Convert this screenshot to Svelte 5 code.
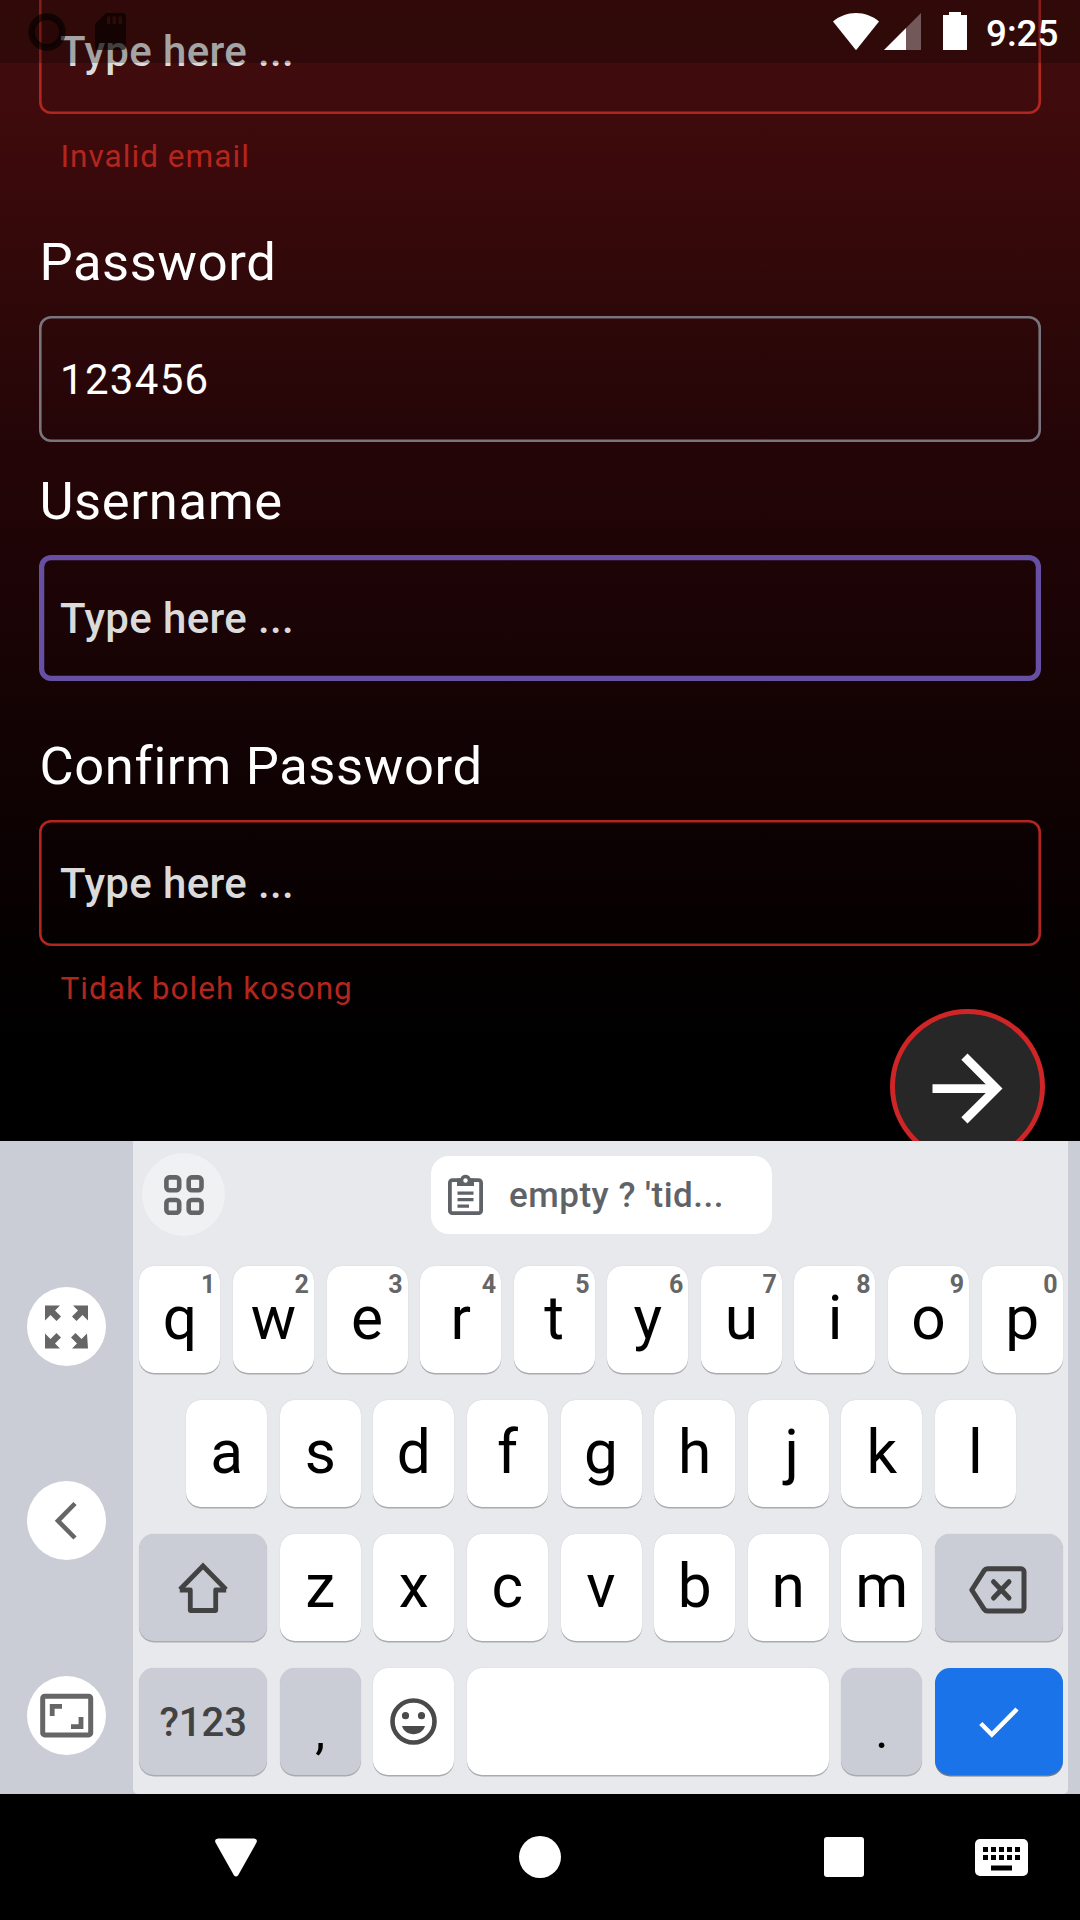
<script>
  const fields = [
    { label: 'Email', value: '', state: 'error', message: 'Invalid email', first: true },
    { label: 'Password', value: '123456', state: 'idle', message: null },
    { label: 'Username', value: '', state: 'focus', message: '' },
    { label: 'Confirm Password', value: '', state: 'error', message: 'Tidak boleh kosong' }
  ];
  const topRow = [...'qwertyuiop'].map((c, i) => ({ c, hint: (i + 1) % 10 }));
  const homeRow = [...'asdfghjkl'];
  const bottomRow = [...'zxcvbnm'];
</script>

<div class="screen">
  <main class="app">
    <form class="form">
      {#each fields as f}
        <section class="group">
          {#if !f.first}<div class="label">{f.label}</div>{/if}
          <div class="field {f.state}">
            <span class={f.value ? 'value' : 'hint'}>{f.value || 'Type here ...'}</span>
          </div>
          {#if f.message !== null}<div class="message" class:blank={!f.message}>{f.message}</div>{/if}
        </section>
      {/each}
      <div class="submit">
        <svg width="105" height="105" viewBox="0 0 24 24"><path fill="#fff" d="M12 4l-1.41 1.41L16.17 11H4v2h12.17l-5.58 5.59L12 20l8-8z" /></svg>
      </div>
    </form>

    <header class="status">
      <svg class="rec" width="38" height="38" viewBox="0 0 38 38"><circle cx="19" cy="19" r="15.4" fill="#000" fill-opacity=".12" stroke="#000" stroke-opacity=".58" stroke-width="6.6" /></svg>
      <svg class="sd" width="31" height="38" viewBox="0 0 31 38"><path fill="#000" fill-opacity=".6" fill-rule="evenodd" d="M11 0h16.500a3.500 3.500 0 0 1 3.500 3.500v30a3.500 3.500 0 0 1-3.500 3.500h-24a3.500 3.500 0 0 1-3.500-3.500v-22.500zM12 3.500v7.500h3.300v-7.500zM17.500 3.500v7.500h3.500v-7.500zM23.500 3.500v7.500h3.500v-7.500z" /></svg>
      <svg class="wifi" width="46" height="38" viewBox="0 0 46 38"><path fill="#fff" d="M0 8.500C6.500 3 14.500 0 23 0s16.500 3 23 8.500L23 37.300z" /></svg>
      <svg class="signal" width="37" height="37" viewBox="0 0 37 37"><path fill="#fff" fill-opacity=".32" d="M22 15L37 0v37H22z" /><path fill="#fff" d="M0 37L22 15v22z" /></svg>
      <svg class="battery" width="24" height="38" viewBox="0 0 24 38"><path fill="#fff" d="M6 0h12v3h6v35H0V3h6z" /></svg>
      <span class="clock">9:25</span>
    </header>
  </main>

  <section class="keyboard">
    <aside class="side">
      <div class="round">
        <svg width="79" height="79" viewBox="0 0 79 79" fill="#666"><path d="M18 18.500h15l-5 5 6 6-4.500 4.500-6-6-5.500 5.500zM61 18.500v15l-5.500-5.500-6 6-4.500-4.500 6-6-5-5zM18 61.500v-15l5.500 5.500 6-6 4.500 4.500-6 6 5 5zM61 61.500h-16l5-5-6-6 4.500-4.500 6 6 5.500-5.500z" /></svg>
      </div>
      <div class="round">
        <svg width="79" height="79" viewBox="0 0 79 79" fill="none" stroke="#666" stroke-width="4.600"><path d="M48 22.500L31 39.800L48 57" /></svg>
      </div>
      <div class="round">
        <svg width="79" height="79" viewBox="0 0 79 79" fill="none" stroke="#666"><rect x="15.700" y="20.300" width="48" height="38.600" rx="2" stroke-width="5" /><path stroke-width="4.800" d="M25.200 40V30.400H35M54 41v9.600H44" /></svg>
      </div>
    </aside>

    <div class="board">
      <div class="tools">
        <div class="apps">
          <svg width="40" height="40" viewBox="0 0 40 40" fill="none" stroke="#626565" stroke-width="4.600"><rect x="2.400" y="2.400" width="12.800" height="12.800" rx="3" /><rect x="24.700" y="2.400" width="12.800" height="12.800" rx="3" /><rect x="2.400" y="25" width="12.800" height="12.800" rx="3" /><rect x="24.700" y="25" width="12.800" height="12.800" rx="3" /></svg>
        </div>
        <div class="chip">
          <svg width="35" height="42" viewBox="0 0 35 42"><rect x="1.900" y="6.200" width="31.200" height="33" rx="2.500" fill="none" stroke="#5f6368" stroke-width="3.800" /><path fill="#5f6368" d="M9 4.500h3.500a5.200 5.200 0 0 1 10 0H26v7.500H9zM9.500 17.500h16v3.300h-16zM9.500 24h16v3.300h-16zM9.500 30.500h11.500v3.300h-11.500z" /><circle cx="17.500" cy="6.500" r="2.200" fill="#fff" /></svg>
          <span>empty ? 'tid...</span>
        </div>
      </div>

      <div class="row">
        {#each topRow as k}
          <div class="key">{k.c}<span class="digit">{k.hint}</span></div>
        {/each}
      </div>
      <div class="row">
        {#each homeRow as c}<div class="key" class:hooked={c === 'j'}>{c}</div>{/each}
      </div>
      <div class="row">
        <div class="key gray wide">
          <svg width="52" height="52" viewBox="0 0 52 52" fill="none" stroke="#424242" stroke-width="4.800" stroke-linejoin="round"><path stroke-linejoin="miter" d="M3 27.500L26 4L49 27.500" /><path d="M2.800 28H13.300V48.500H38.700V28H49.200" /></svg>
        </div>
        {#each bottomRow as c}<div class="key">{c}</div>{/each}
        <div class="key gray wide">
          <svg class="del" width="58" height="48" viewBox="0 0 58 48" fill="none" stroke="#424242" stroke-width="5" stroke-linejoin="round" stroke-linecap="round"><path d="M18.500 2.800H52a3 3 0 0 1 3 3V42a3 3 0 0 1-3 3H18.500a4 4 0 0 1-3.300-1.700L2.800 24L15.200 4.500A4 4 0 0 1 18.500 2.800z" /><path d="M24.500 15.700L40 32M40 15.700L24.500 32" /></svg>
        </div>
      </div>
      <div class="row">
        <div class="key gray wide sym">?123</div>
        <div class="key gray punct">,</div>
        <div class="key">
          <svg class="smile" width="47" height="47" viewBox="0 0 47 47"><circle cx="23.500" cy="23.500" r="21" fill="none" stroke="#4a4a4a" stroke-width="4.600" /><circle cx="15.500" cy="17.700" r="3.600" fill="#4a4a4a" /><circle cx="31.500" cy="17.700" r="3.600" fill="#4a4a4a" /><path fill="#4a4a4a" d="M12 28h23c-1.500 5-6 8.200-11.500 8.200S13.500 33 12 28z" /></svg>
        </div>
        <div class="key space"></div>
        <div class="key gray punct">.</div>
        <div class="key blue wide">
          <svg class="tick" width="40" height="32" viewBox="0 0 40 32" fill="none" stroke="#fff" stroke-width="4.500"><path d="M1.800 16.500L12.800 27.500L38 2" /></svg>
        </div>
      </div>
    </div>
    <div class="edge"></div>
  </section>

  <nav class="nav">
    <svg class="back" width="42" height="39" viewBox="0 0 42 39"><path fill="#fff" d="M3 .5h36q4 .5 2.500 4L23 37.500q-2 2-4 0L.5 4.500Q-1 1 3 .5z" /></svg>
    <svg class="home" width="42" height="42" viewBox="0 0 42 42"><circle cx="21" cy="21" r="21" fill="#fff" /></svg>
    <svg class="recents" width="40" height="40" viewBox="0 0 40 40"><rect width="40" height="40" rx="3" fill="#fff" /></svg>
    <svg class="ime" width="53" height="37" viewBox="0 0 53 37">
      <rect width="53" height="37" rx="5" fill="#fff" />
      {#each [8, 16, 24, 32, 40] as x}
        <rect {x} y="8" width="5" height="5" /><rect {x} y="16" width="5" height="5" />
      {/each}
      <rect x="16" y="26.500" width="21" height="5" />
    </svg>
  </nav>
</div>

<style>
  :global(body) { margin: 0; background: #000; }
  .screen { width: 1080px; height: 1920px; display: flex; flex-direction: column; overflow: hidden; font-family: Roboto, sans-serif; background: #000; }
  svg { display: block; flex: none; }
  .app { position: relative; height: 1141px; flex: none; overflow: hidden; background: linear-gradient(180deg, #420d0e 0px, #400b0c 90px, #3a090b 180px, #2f0809 300px, #250507 430px, #1e0406 560px, #150304 700px, #0d0102 830px, #040000 960px, #000 1060px); }
  .form { display: flex; flex-direction: column; padding: 0 39.4px; margin-top: -12px; }
  .group { display: flex; flex-direction: column; }
  .label { margin-top: 27px; height: 62px; line-height: 64px; font-size: 52.5px; letter-spacing: .66px; color: #fff; white-space: nowrap; }
  .label + .field { margin-top: 24px; }
  .field { box-sizing: border-box; height: 126px; border-radius: 12px; padding: 0 20.600px; box-shadow: inset 0 0 0 2.600px #79747e; font-size: 42px; line-height: 128px; white-space: nowrap; }
  .error { box-shadow: inset 0 0 0 2.600px #b3261e; }
  .focus { box-shadow: inset 0 0 0 5.250px #6750a4; }
  .value { color: #fff; letter-spacing: 1.31px; }
  .hint { color: #dbdbdb; font-weight: 500; letter-spacing: .36px; }
  .message { margin-top: 23.500px; height: 30px; line-height: 37px; font-size: 31.500px; letter-spacing: 1.05px; color: #b3261e; padding-left: 21px; white-space: nowrap; }
  .group:first-child .message { height: 65.500px; }
  .message.blank { margin-top: 0; height: 26px; }
  .submit { align-self: flex-end; box-sizing: border-box; width: 155px; height: 155px; margin: 9.500px -4.300px 0 0; border: 5px solid #d02527; border-radius: 50%; background: #272727; display: flex; align-items: center; justify-content: center; padding-top: 3px; }
  .status { position: absolute; inset: 0 0 auto 0; height: 63px; background: rgba(0, 0, 0, .25); display: flex; align-items: flex-start; box-sizing: border-box; padding: 12px 21px 0 28px; }
  .rec { margin-top: 1px; }
  .sd { margin: 1px auto 0 29px; }
  .wifi { margin: 1px 5px 0 0; }
  .signal { margin: 1px 22px 0 0; }
  .battery { margin-right: 19px; }
  .clock { width: 73px; font-size: 36.750px; font-weight: 500; color: #fff; line-height: 43px; }

  .keyboard { height: 653px; flex: none; display: flex; background: #cacdd6; }
  .side { width: 133px; box-sizing: border-box; padding-top: 146px; display: flex; flex-direction: column; align-items: center; gap: 115.400px; }
  .round { width: 79px; height: 79px; border-radius: 50%; background: #fff; flex: none; }
  .board { width: 935px; background: #e8e9ed; border-radius: 0 0 5px 5px; flex: none; }
  .tools { height: 125.400px; box-sizing: border-box; padding: 12px 0 0 9px; display: flex; align-items: flex-start; }
  .apps { width: 83px; height: 83px; border-radius: 50%; background: #f0f1f3; display: flex; align-items: center; justify-content: center; }
  .chip { margin: 3px 0 0 206px; width: 341px; height: 78px; box-sizing: border-box; border-radius: 18px; background: #fff; display: flex; align-items: center; padding-left: 17px; gap: 26px; font-size: 35px; font-weight: 500; letter-spacing: .5px; color: #5f6368; white-space: nowrap; }
  .row { height: 134px; display: flex; gap: 12.600px; justify-content: center; align-items: flex-start; padding-left: 1px; }
  .key { position: relative; box-sizing: border-box; width: 81px; height: 107px; border-radius: 15px; background: #fff; box-shadow: 0 1.500px 0 #a9abaf, 0 0 1px rgba(0, 0, 0, .2); text-align: center; font-size: 60.400px; line-height: 105px; color: #000; display: flex; justify-content: center; }
  .hooked { padding-left: 7px; }
  .digit { position: absolute; top: 3.600px; right: 5px; font-size: 25px; line-height: 29px; font-weight: 700; color: #666; }
  .gray { background: #cacdd6; }
  .wide { width: 127.800px; }
  .wide svg { margin-top: 28px; }
  .wide .del { margin: 32px 2px 0 0; }
  .wide .tick { margin-top: 38.500px; }
  .smile { margin-top: 30px; }
  .sym { font-size: 40px; font-weight: 500; color: #424242; line-height: 110px; }
  .punct { font-size: 50px; line-height: 126px; }
  .space { width: 361.800px; }
  .blue { background: #1a73e8; box-shadow: 0 1.500px 0 #757b86; }
  .edge { flex: 1; }

  .nav { height: 126px; flex: none; background: #000; display: flex; align-items: center; }
  .back { margin-left: 215px; }
  .home { margin-left: 262px; }
  .recents { margin-left: 263px; }
  .ime { margin: 1px 0 0 111px; }
</style>
